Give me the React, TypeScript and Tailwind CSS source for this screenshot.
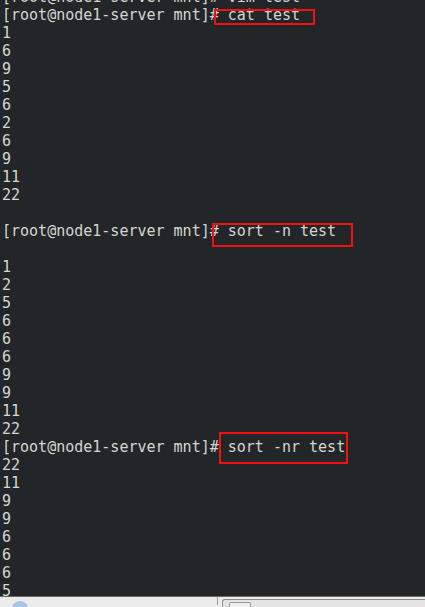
const lines = [
  "[root@node1-server mnt]# vim test",
  "[root@node1-server mnt]# cat test",
  "1",
  "6",
  "9",
  "5",
  "6",
  "2",
  "6",
  "9",
  "11",
  "22",
  "",
  "[root@node1-server mnt]# sort -n test",
  "",
  "1",
  "2",
  "5",
  "6",
  "6",
  "6",
  "9",
  "9",
  "11",
  "22",
  "[root@node1-server mnt]# sort -nr test",
  "22",
  "11",
  "9",
  "9",
  "6",
  "6",
  "6",
  "5",
];

export default function App() {
  return (
    <div className="w-[425px] h-[607px] overflow-hidden bg-[#ececec] flex flex-col">
      {/* terminal */}
      <div className="relative h-[597px] shrink-0 overflow-hidden bg-[#232629] border-b border-[#6b6b6b]">
        <div
          className="mt-[-12px] pl-[2px] text-[15px] leading-[18px] text-[#d3d7cf] whitespace-pre"
          style={{ fontFamily: '"DejaVu Sans Mono", "Liberation Mono", monospace' }}
        >
          {lines.map((l, i) => (
            <div key={i} className="h-[18px]">
              {l}
            </div>
          ))}
        </div>

        {/* annotation boxes */}
        <div className="absolute left-[214px] top-[9px] w-[101px] h-[16px] border-2 border-[#f21010]" />
        <div className="absolute left-[212px] top-[223px] w-[141px] h-[24px] border-2 border-[#f21010]" />
        <div className="absolute left-[219px] top-[432px] w-[129px] h-[32px] border-2 border-[#f21010]" />
      </div>

      {/* bottom bar, cropped */}
      <div className="flex-1 flex items-start pt-[4px]">
        <div className="ml-[12px] w-[16px] h-[8px] rounded-t-full bg-[#a9c3e6]" />
        <div className="ml-[189px] w-[1px] h-full bg-[#9a9a9a] mt-[-4px]" />
        <div className="ml-[4px] flex-1 h-[10px] mt-[-2px] rounded-tl-[3px] border-l border-t border-[#8c8c8c] bg-[#e4e4e4] pl-[6px] pt-[2px]">
          <div className="w-[22px] h-[8px] border-l border-t border-r border-[#9a9a9a] rounded-t-[2px] bg-[#efefef]" />
        </div>
      </div>
    </div>
  );
}
